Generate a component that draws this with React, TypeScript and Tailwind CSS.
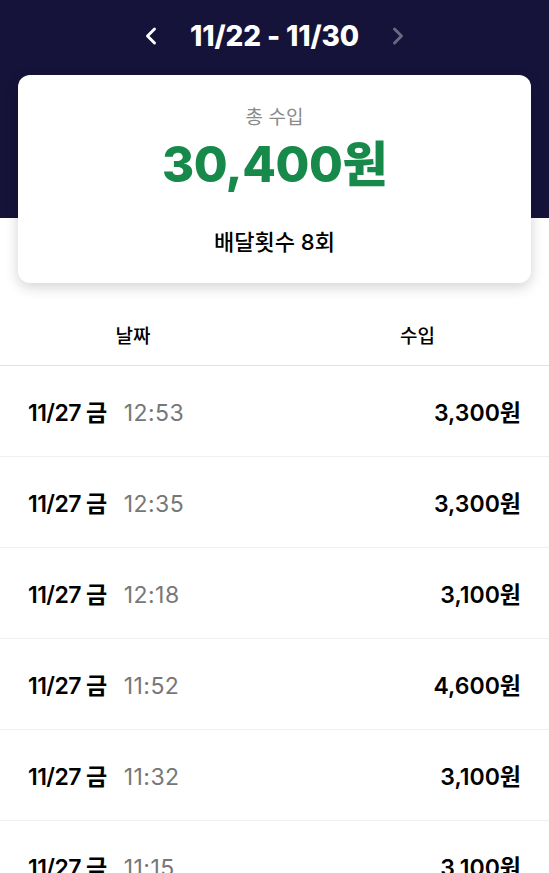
import { ChevronLeft, ChevronRight } from "lucide-react";

const rows = [
  { date: "11/27 금", time: "12:53", amount: "3,300원" },
  { date: "11/27 금", time: "12:35", amount: "3,300원" },
  { date: "11/27 금", time: "12:18", amount: "3,100원" },
  { date: "11/27 금", time: "11:52", amount: "4,600원" },
  { date: "11/27 금", time: "11:32", amount: "3,100원" },
  { date: "11/27 금", time: "11:15", amount: "3,100원" },
];

export default function App() {
  return (
    <div
      className="w-[549px] h-[873px] overflow-hidden bg-white text-black"
      style={{ fontFamily: "Inter, 'Noto Sans CJK KR', sans-serif" }}
    >
      {/* HEADER */}
      <div className="relative h-[218px] bg-[#16133a]">
        <div className="flex items-center justify-center h-[76px] pb-1">
          <ChevronLeft className="size-7 text-white" strokeWidth={2.5} />
          <h1 className="mx-[25px] text-[28px] font-extrabold tracking-[-0.005em] text-white">
            11/22 - 11/30
          </h1>
          <ChevronRight className="size-7 text-[#6b6a80]" strokeWidth={2.5} />
        </div>

        {/* SUMMARY CARD */}
        <div className="absolute left-[18px] right-[18px] top-[75px] h-[208px] rounded-xl bg-white shadow-[0_4px_14px_rgba(0,0,0,0.18)] flex flex-col items-center">
          <p className="mt-[29px] text-[19px] text-[#8a8a8a]">총 수입</p>
          <p className="mt-[2px] text-[49px] leading-[60px] font-extrabold tracking-[-0.01em] text-[#17894b]">
            30,400원
          </p>
          <p className="mt-[31px] text-[22px] font-medium">배달횟수 8회</p>
        </div>
      </div>

      {/* TABLE HEAD */}
      <div className="mt-[98px] flex h-[50px] items-start pt-[7px] border-b border-[#e2e2e2] text-[19px] font-medium">
        <div className="w-[266px] text-center">날짜</div>
        <div className="flex-1 text-center pl-[20px]">수입</div>
      </div>

      {/* ROWS */}
      {rows.map((r, i) => (
        <div
          key={i}
          className="flex h-[91px] items-center justify-between border-b border-[#efefef] pl-[28px] pr-[28px] pt-[4px] text-[23px]"
        >
          <div className="flex items-center">
            <span className="font-semibold tracking-tight">{r.date}</span>
            <span className="ml-[17px] text-[#777777] tracking-[0.02em]">{r.time}</span>
          </div>
          <span className="font-semibold">{r.amount}</span>
        </div>
      ))}
    </div>
  );
}
